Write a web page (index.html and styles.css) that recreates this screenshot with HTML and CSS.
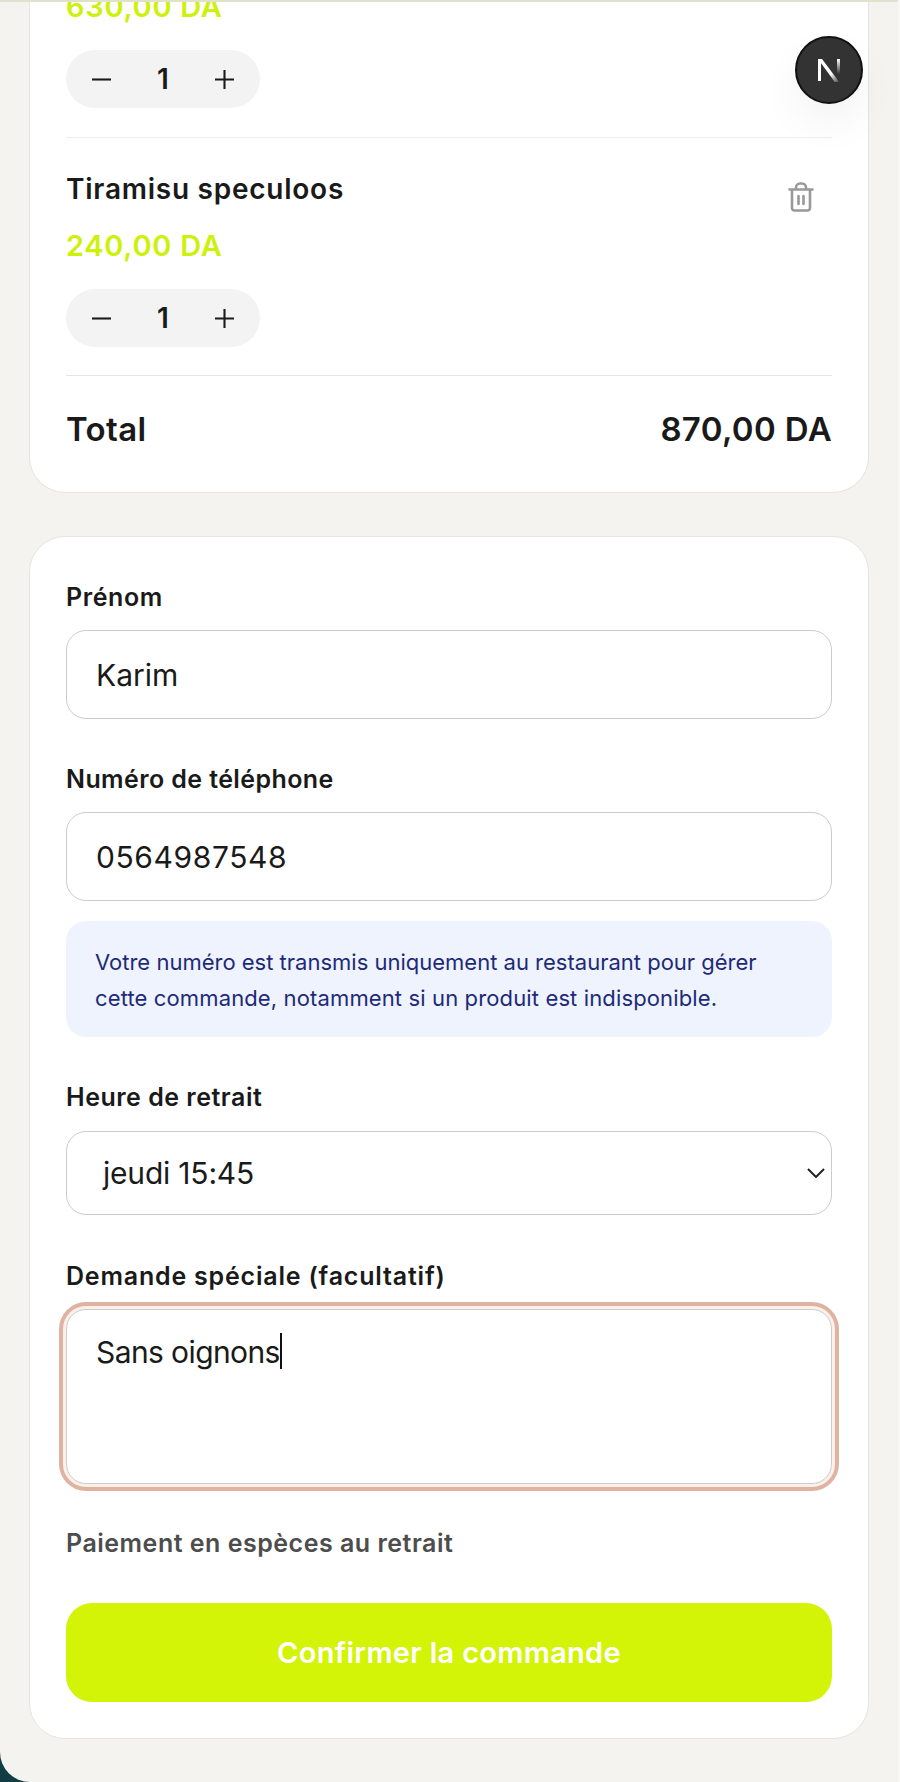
FILE: index.html
```html
<!DOCTYPE html>
<html lang="fr">
<head>
<meta charset="utf-8">
<title>Commande</title>
<link rel="stylesheet" href="styles.css">
</head>
<body>
<div class="window">
  <main class="page">
    <section class="card cart">
      <div class="price first">630,00 DA</div>
      <div class="qty">
        <svg class="qty-icon" viewBox="0 0 20 20"><path d="M0 10H20"/></svg>
        <span class="qty-num">1</span>
        <svg class="qty-icon" viewBox="0 0 20 20"><path d="M0 10H20M10 0V20"/></svg>
      </div>
      <hr class="rule">
      <div class="item-head">
        <h2 class="item-name">Tiramisu speculoos</h2>
        <svg class="trash" viewBox="0 0 26 30"><path d="M1.500 7.500H24.500M8 7V5.500A4 4 0 0 1 12 1.500H14A4 4 0 0 1 18 5.500V7M4 7.500V26A2.500 2.500 0 0 0 6.500 28.500H19.500A2.500 2.500 0 0 0 22 26V7.500M10.500 14V22M15.500 14V22"/></svg>
      </div>
      <div class="price">240,00 DA</div>
      <div class="qty">
        <svg class="qty-icon" viewBox="0 0 20 20"><path d="M0 10H20"/></svg>
        <span class="qty-num">1</span>
        <svg class="qty-icon" viewBox="0 0 20 20"><path d="M0 10H20M10 0V20"/></svg>
      </div>
      <hr class="rule rule-total">
      <div class="total"><span>Total</span><span>870,00 DA</span></div>
    </section>

    <section class="card form">
      <div class="label">Prénom</div>
      <div class="field field-name">Karim</div>
      <div class="label label-next">Numéro de téléphone</div>
      <div class="field field-phone">0564987548</div>
      <p class="info">Votre numéro est transmis uniquement au restaurant pour gérer<br><span class="info-second">cette commande, notamment si un produit est indisponible.</span></p>
      <div class="label label-time">Heure de retrait</div>
      <div class="select">
        <span>jeudi 15:45</span>
        <svg class="chevron" viewBox="0 0 18 10"><path d="M1 1L9 9L17 1"/></svg>
      </div>
      <div class="label label-note">Demande spéciale (facultatif)</div>
      <div class="textarea"><span>Sans oignons</span><span class="caret"></span></div>
      <div class="payment">Paiement en espèces au retrait</div>
      <button class="confirm" type="button">Confirmer la commande</button>
    </section>
  </main>
  <div class="topline"></div>
  <div class="next-badge">
    <svg viewBox="0 0 24 24" class="next-logo">
      <defs>
        <linearGradient id="fadeA" x1="0" y1="0" x2="1" y2="1"><stop offset="0.6" stop-color="#fff"/><stop offset="1" stop-color="#fff" stop-opacity="0"/></linearGradient>
        <linearGradient id="fadeB" x1="0" y1="0" x2="0" y2="1"><stop offset="0" stop-color="#fff"/><stop offset="1" stop-color="#fff" stop-opacity="0"/></linearGradient>
      </defs>
      <path d="M1 1H4V23H1Z" fill="#fff"/>
      <path d="M1 1H5L23 25H18.500Z" fill="url(#fadeA)"/>
      <rect x="20" y="1" width="3" height="15" fill="url(#fadeB)"/>
    </svg>
  </div>
</div>
</body>
</html>
```
FILE: styles.css
```css
* { box-sizing: border-box; }
html, body { margin: 0; height: 1782px; }
body {
  background: linear-gradient(90deg, #123c44, #2a6a70);
  font-family: "Inter", "Liberation Sans", sans-serif;
  color: #1a1a1a;
  overflow: hidden;
}
.window {
  position: relative;
  height: 1782px;
  background: #f4f3ef;
  border-bottom-left-radius: 30px;
  border-right: 2px solid #f8f7f4;
  overflow: hidden;
}
.page {
  display: flex;
  flex-direction: column;
  gap: 43px;
  width: 840px;
  margin-left: 29px;
}
.card {
  background: #fff;
  border: 1px solid #e4e4e0;
  padding: 0 36px;
}
.cart {
  height: 493px;
  border-top: 0;
  border-radius: 0 0 36px 36px;
}
.form {
  height: 1203px;
  border-radius: 36px;
  padding-top: 43px;
}
.price {
  color: #cdf10b;
  font-size: 29px;
  font-weight: 600;
  letter-spacing: 0.7px;
  line-height: 36px;
  height: 36px;
  margin-top: 16px;
}
.price.first { margin-top: -11px; }
.qty {
  display: flex;
  align-items: center;
  justify-content: space-between;
  width: 194px;
  height: 58px;
  margin-top: 25px;
  padding: 0 26px;
  background: #f3f3f3;
  border-radius: 29px;
}
.qty-icon { width: 19px; height: 19px; fill: none; stroke: #1a1a1a; stroke-width: 2.2; }
.qty-num { font-size: 28px; font-weight: 600; line-height: 1; }
.rule { border: 0; border-top: 1px solid #efefed; margin: 29px 0 0; }
.rule-total { margin-top: 28px; border-color: #e4e4e0; }
.item-head { display: flex; justify-content: space-between; align-items: flex-start; margin-top: 33px; padding-right: 18px; }
.item-name { margin: 0; font-size: 28px; font-weight: 600; letter-spacing: 0.75px; line-height: 36px; }
.trash { width: 26px; height: 30px; margin-top: 11px; fill: none; stroke: #999; stroke-width: 2.6; stroke-linecap: round; stroke-linejoin: round; }
.total { display: flex; justify-content: space-between; margin-top: 33px; font-size: 33px; font-weight: 600; letter-spacing: 0.35px; line-height: 40px; }
.label { height: 32px; font-size: 25px; font-weight: 600; letter-spacing: 0.6px; line-height: 34px; }
.label-next { margin-top: 43px; letter-spacing: 0.4px; }
.label-time { margin-top: 43px; letter-spacing: 0.5px; }
.label-note { margin-top: 44px; letter-spacing: 0.8px; }
.field {
  height: 89px;
  margin-top: 18px;
  padding: 0 29px;
  display: flex;
  align-items: center;
  border: 1px solid #ccc;
  border-radius: 20px;
  font-size: 30px;
}
.field-name { letter-spacing: 0; }
.field-phone { letter-spacing: 0.6px; }
.info {
  margin: 20px 0 0;
  height: 116px;
  padding: 23px 29px 0;
  background: #eef3fe;
  border-radius: 20px;
  color: #1e2a78;
  font-size: 22px;
  line-height: 36px;
}
.info-second { letter-spacing: 0.13px; }
.select {
  display: flex;
  align-items: center;
  justify-content: space-between;
  height: 84px;
  margin-top: 19px;
  padding: 0 6px 0 36px;
  border: 1px solid #ccc;
  border-radius: 20px;
  font-size: 30px;
  letter-spacing: -0.2px;
}
.chevron { width: 18px; height: 10px; fill: none; stroke: #222; stroke-width: 2; }
.textarea {
  height: 175px;
  margin-top: 18px;
  padding: 22px 29px;
  display: flex;
  align-items: flex-start;
  border: 1px solid #ccc;
  border-radius: 20px;
  outline: 3px solid #fbf1ea;
  box-shadow: 0 0 0 7px #dfb3a2;
  font-size: 30px;
  line-height: 40px;
  letter-spacing: -0.6px;
}
.caret { width: 2px; height: 36px; background: #111; margin-top: 1px; }
.payment { margin-top: 43px; font-size: 25px; font-weight: 600; letter-spacing: 0.5px; line-height: 32px; color: #4d4d4d; }
.confirm {
  display: block;
  width: 100%;
  height: 99px;
  margin-top: 44px;
  border: 0;
  border-radius: 26px;
  background: #d3f307;
  color: #fff;
  font: 600 29px "Inter", "Liberation Sans", sans-serif;
  letter-spacing: 0.3px;
}
.topline { position: absolute; top: 0; left: 0; right: 0; height: 2px; background: #e0e1cc; }
.next-badge {
  position: absolute;
  left: 795px;
  top: 36px;
  width: 68px;
  height: 68px;
  display: flex;
  align-items: center;
  justify-content: center;
  border-radius: 50%;
  background: #333;
  border: 2px solid #111;
  box-shadow: 0 20px 40px rgba(0,0,0,.05);
}
.next-logo { width: 24px; height: 24px; }
```
